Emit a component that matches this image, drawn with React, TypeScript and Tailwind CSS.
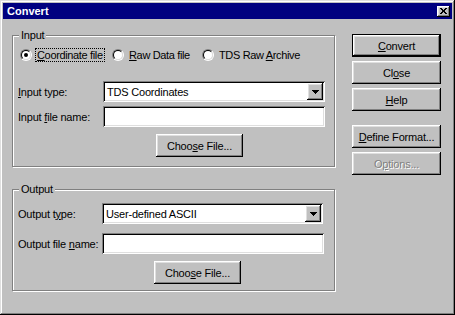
const font = "font-['Liberation_Sans',Arial,sans-serif]";

const raised =
  "shadow-[inset_-1px_-1px_#000,inset_1px_1px_#fff,inset_-2px_-2px_#808080,inset_2px_2px_#dfdfdf]";
const sunken =
  "shadow-[inset_1px_1px_#808080,inset_-1px_-1px_#fff,inset_2px_2px_#000,inset_-2px_-2px_#dfdfdf]";

function U({ children }: { children: string }) {
  return <span className="underline underline-offset-[1px]">{children}</span>;
}

function Radio({ checked }: { checked?: boolean }) {
  return (
    <span className="w-[12px] h-[12px] shrink-0 rounded-full border border-t-[#808080] border-l-[#808080] border-r-white border-b-white">
      <span className="w-full h-full rounded-full border border-t-black border-l-black border-r-[#dfdfdf] border-b-[#dfdfdf] bg-white flex items-center justify-center">
        {checked && <span className="w-[4px] h-[4px] rounded-full bg-black" />}
      </span>
    </span>
  );
}

function Arrow() {
  return (
    <svg width="7" height="4" viewBox="0 0 7 4" shapeRendering="crispEdges">
      <rect x="0" y="0" width="7" height="1" fill="#000" />
      <rect x="1" y="1" width="5" height="1" fill="#000" />
      <rect x="2" y="2" width="3" height="1" fill="#000" />
      <rect x="3" y="3" width="1" height="1" fill="#000" />
    </svg>
  );
}

function Combo({ value, width }: { value: string; width: string }) {
  return (
    <div className={`${width} h-[21px] bg-white ${sunken} flex items-center pl-[4px] pr-[2px]`}>
      <span className="flex-1 text-black">{value}</span>
      <span className={`w-[16px] h-[17px] bg-[#c0c0c0] ${raised} flex items-center justify-center`}>
        <Arrow />
      </span>
    </div>
  );
}

function TextBox({ width }: { width: string }) {
  return <div className={`${width} h-[21px] bg-white ${sunken}`} />;
}

function Button({
  children,
  className = "",
  isDefault,
  disabled,
}: {
  children: React.ReactNode;
  className?: string;
  isDefault?: boolean;
  disabled?: boolean;
}) {
  return (
    <div
      className={`h-[23px] bg-[#c0c0c0] flex items-center justify-center ${
        isDefault ? "border border-black" : ""
      } ${className}`}
    >
      <div
        className={`w-full h-full ${raised} flex items-center justify-center ${
          disabled ? "text-[#808080] [text-shadow:1px_1px_0_#fff]" : "text-black"
        }`}
      >
        {children}
      </div>
    </div>
  );
}

function Group({
  label,
  className,
  children,
}: {
  label: string;
  className: string;
  children: React.ReactNode;
}) {
  return (
    <div
      className={`relative w-[323px] border border-[#808080] shadow-[inset_1px_1px_#fff,1px_1px_#fff] ${className}`}
    >
      <span className="absolute -top-[8px] left-[6px] px-[2px] bg-[#c0c0c0] leading-[14px]">
        {label}
      </span>
      {children}
    </div>
  );
}

export default function App() {
  return (
    <div
      className={`w-[455px] h-[315px] bg-[#c0c0c0] p-[3px] flex flex-col text-[11px] leading-[14px] tracking-[-0.2px] text-black ${font} shadow-[inset_-1px_-1px_#000,inset_1px_1px_#dfdfdf,inset_-2px_-2px_#808080,inset_2px_2px_#fff]`}
    >
      <div className="h-[16px] bg-[#000080] flex items-center justify-between pl-[4px] pr-[2px]">
        <span className="text-white font-bold text-[11px] tracking-normal">Convert</span>
        <span className={`w-[13px] h-[11px] bg-[#c0c0c0] ${raised} flex items-center justify-center`}>
          <svg width="7" height="6" viewBox="0 0 7 6" shapeRendering="crispEdges">
            <path d="M0 0h2v1H0zM5 0h2v1H5zM1 1h2v1H1zM4 1h2v1H4zM2 2h3v2H2zM1 4h2v1H1zM4 4h2v1H4zM0 5h2v1H0zM5 5h2v1H5z" fill="#000" />
          </svg>
        </span>
      </div>

      <div className="flex">
        <div className="ml-[9px] flex flex-col">
          <Group label="Input" className="mt-[16px] h-[132px]">
            <div className="mt-[12px] ml-[7px] flex items-center h-[14px] tracking-[-0.35px]">
              <div className="w-[92px] flex items-center">
                <Radio checked />
                <span className="ml-[3px] px-[1px] border border-dotted border-black leading-[12px]">
                  <U>C</U>oordinate file
                </span>
              </div>
              <div className="w-[90px] flex items-center">
                <Radio />
                <span className="ml-[3px] px-[1px] border border-transparent leading-[12px]">
                  <U>R</U>aw Data file
                </span>
              </div>
              <div className="flex items-center">
                <Radio />
                <span className="ml-[3px] px-[1px] border border-transparent leading-[12px]">
                  TDS Raw <U>A</U>rchive
                </span>
              </div>
            </div>
            <div className="mt-[19px] flex items-center h-[21px]">
              <span className="ml-[5px] w-[85px]">
                <U>I</U>nput type:
              </span>
              <Combo value="TDS Coordinates" width="w-[222px]" />
            </div>
            <div className="mt-[4px] flex items-center h-[21px]">
              <span className="ml-[5px] w-[85px]">
                Input <U>f</U>ile name:
              </span>
              <TextBox width="w-[222px]" />
            </div>
            <Button className="mt-[7px] ml-[143px] w-[87px]">
              <span>
                Choo<U>s</U>e File...
              </span>
            </Button>
          </Group>

          <Group label="Output" className="mt-[22px] h-[102px]">
            <div className="mt-[13px] flex items-center h-[21px]">
              <span className="ml-[5px] w-[84px]">
                Output t<U>y</U>pe:
              </span>
              <Combo value="User-defined ASCII" width="w-[221px]" />
            </div>
            <div className="mt-[9px] flex items-center h-[21px]">
              <span className="ml-[5px] w-[84px]">
                Output file <U>n</U>ame:
              </span>
              <TextBox width="w-[222px]" />
            </div>
            <Button className="mt-[7px] ml-[141px] w-[87px]">
              <span>
                Choo<U>s</U>e File...
              </span>
            </Button>
          </Group>
        </div>

        <div className="ml-[17px] mt-[15px] w-[89px] flex flex-col gap-[4px]">
          <Button isDefault>
            <span>
              <U>C</U>onvert
            </span>
          </Button>
          <Button>
            <span>
              Cl<U>o</U>se
            </span>
          </Button>
          <Button>
            <span>
              <U>H</U>elp
            </span>
          </Button>
          <Button className="mt-[10px]">
            <span>
              <U>D</U>efine Format...
            </span>
          </Button>
          <Button disabled>
            <span>
              O<U>p</U>tions...
            </span>
          </Button>
        </div>
      </div>
    </div>
  );
}
